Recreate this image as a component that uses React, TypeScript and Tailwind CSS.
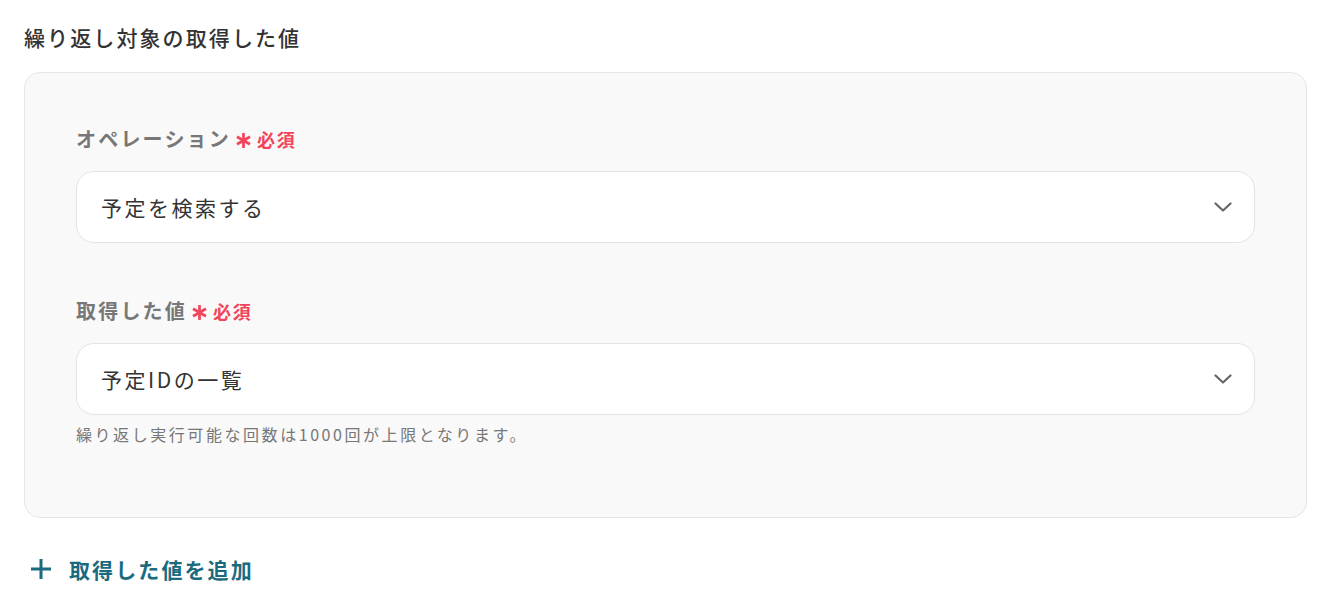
import React from "react";

const font = { fontFamily: '"Noto Sans CJK JP", "Noto Sans", sans-serif' };

function Asterisk() {
  return (
    <svg width="17" height="17" viewBox="0 0 16 16" className="shrink-0">
      <g stroke="#f2455b" strokeWidth="2.6" strokeLinecap="butt">
        <line x1="8" y1="1" x2="8" y2="15" />
        <line x1="1.9" y1="4.5" x2="14.1" y2="11.5" />
        <line x1="1.9" y1="11.5" x2="14.1" y2="4.5" />
      </g>
    </svg>
  );
}

function Label({ text }: { text: string }) {
  return (
    <div className="flex items-center h-[28px]">
      <span className="text-[20px] leading-[28px] font-bold text-[#777777] tracking-[0.11em]">{text}</span>
      <span className="ml-[4px] mt-[3px]"><Asterisk /></span>
      <span className="ml-[5px] text-[18px] leading-[28px] font-bold text-[#f2455b] tracking-[0.1em]">必須</span>
    </div>
  );
}

function Select({ value }: { value: string }) {
  return (
    <div className="mt-[18px] h-[72px] bg-white border border-[#e1e3e8] rounded-[18px] flex items-center justify-between pl-[24px] pr-[22px]">
      <span className="text-[21px] leading-[28px] text-[#333333] tracking-[0.12em]">{value}</span>
      <svg width="18" height="10" viewBox="0 0 18 10" fill="none">
        <path d="M1.5 1.5 L9 8.5 L16.5 1.5" stroke="#666666" strokeWidth="2.2" strokeLinecap="round" strokeLinejoin="round" />
      </svg>
    </div>
  );
}

export default function App() {
  return (
    <div className="w-[1328px] h-[606px] bg-white px-[24px] pt-[23px]" style={font}>
      <div className="text-[21px] leading-[28px] font-medium text-[#333333] tracking-[0.1em]">繰り返し対象の取得した値</div>
      <div className="mt-[21px] w-[1283px] h-[446px] bg-[#f9f9f9] border border-[#e6e6e6] rounded-[16px] pl-[51px] pr-[51px] pt-[52px]">
        <Label text="オペレーション" />
        <Select value="予定を検索する" />
        <div className="h-[54px]" />
        <Label text="取得した値" />
        <Select value="予定IDの一覧" />
        <div className="mt-[7px] text-[16px] leading-[24px] text-[#777777] tracking-[0.16em]">繰り返し実行可能な回数は1000回が上限となります。</div>
      </div>
      <div className="mt-[37px] flex items-center pl-[6px] h-[28px]">
        <svg width="22" height="22" viewBox="0 0 22 22" fill="none">
          <path d="M11 1 V21 M1 11 H21" stroke="#1b6b80" strokeWidth="3" />
        </svg>
        <span className="ml-[17px] text-[21px] leading-[28px] font-bold text-[#1b6b80] tracking-[0.1em]">取得した値を追加</span>
      </div>
    </div>
  );
}
